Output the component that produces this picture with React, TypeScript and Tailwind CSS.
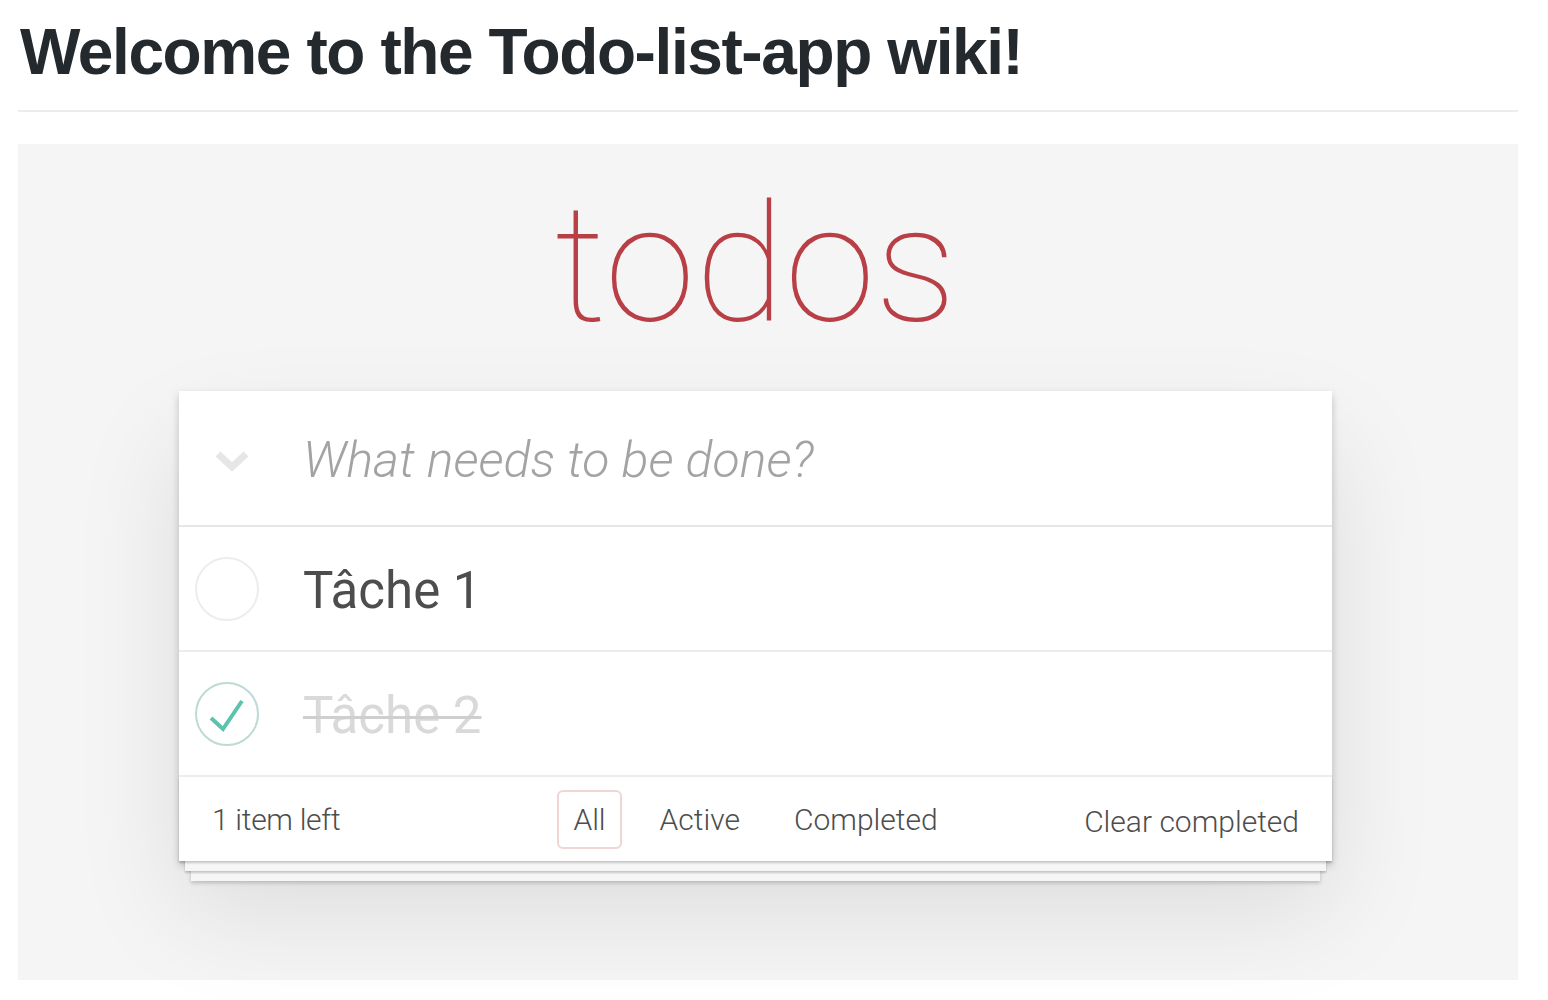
import React from "react";

const ui = { fontFamily: "Roboto, 'Liberation Sans', sans-serif" };

function Chevron() {
  return (
    <svg width="34" height="22" viewBox="0 0 34 22" className="mt-[6px] shrink-0">
      <path d="M3 4 L17 17 L31 4" fill="none" stroke="#e6e6e6" strokeWidth="7" strokeLinejoin="miter" />
    </svg>
  );
}

function Circle({ done }: { done: boolean }) {
  return (
    <svg width="66" height="66" viewBox="0 0 66 66" className="shrink-0">
      <circle cx="33" cy="33" r="31" fill="none" stroke={done ? "#bddad5" : "#ededed"} strokeWidth="2" />
      {done && <path d="M17 37 L29 48 L48 20" fill="none" stroke="#5dc2af" strokeWidth="4" />}
    </svg>
  );
}

function TodoRow({ text, done }: { text: string; done: boolean }) {
  return (
    <li className="flex h-[125px] items-center border-b-2 border-[#ededed] pl-[15px]">
      <Circle done={done} />
      <span
        className={
          done
            ? "ml-[43px] pt-[6px] text-[51px] text-[#d9d9d9] line-through decoration-[#cfcfcf] decoration-[3px]"
            : "ml-[43px] pt-[6px] text-[51px] text-[#4d4d4d]"
        }
        style={ui}
      >
        {text}
      </span>
    </li>
  );
}

export default function App() {
  return (
    <div className="min-h-screen bg-white pl-[18px]">
      <div className="w-[1500px]">
        <h1
          className="border-b-2 border-[#eaecef] pl-[2px] pt-[12px] pb-[18px] text-[64px] font-bold leading-[80px] tracking-[-1.4px] text-[#24292e]"
          style={{ fontFamily: "'Liberation Sans', Arial, sans-serif" }}
        >
          Welcome to the Todo-list-app wiki!
        </h1>

        <div className="mt-[32px] h-[836px] bg-[#f5f5f5] pl-[161px] pt-[35px]">
          <div className="w-[1153px]">
            <div
              className="text-center text-[164px] font-thin leading-[170px] text-[#b83f45]"
              style={ui}
            >
              todos
            </div>

            <section className="mt-[42px] bg-white shadow-[0_4px_8px_rgba(0,0,0,0.2),0_50px_100px_rgba(0,0,0,0.1)]">
              <div className="flex h-[136px] items-center border-b-2 border-[#e6e6e6] pl-[36px]">
                <Chevron />
                <span className="ml-[54px] pt-[4px] text-[50px] font-light italic text-[#a3a3a3]" style={ui}>
                  What needs to be done?
                </span>
              </div>

              <ul>
                <TodoRow text="Tâche 1" done={false} />
                <TodoRow text="Tâche 2" done={true} />
              </ul>

              <footer
                className="grid h-[84px] grid-cols-[1fr_auto_1fr] items-center px-[33px] text-[30px] font-light text-[#4d4d4d] shadow-[0_2px_2px_rgba(0,0,0,0.2),0_16px_0_-6px_#f6f6f6,0_18px_2px_-6px_rgba(0,0,0,0.2),0_32px_0_-12px_#f6f6f6,0_34px_4px_-12px_rgba(0,0,0,0.2)]"
                style={ui}
              >
                <span className="tracking-[-0.3px]">1 item left</span>
                <ul className="flex items-center gap-[22px]">
                  <li className="rounded-[6px] border-2 border-[#efd5d5] px-[14px] py-[5px]">All</li>
                  <li className="border-2 border-transparent px-[14px] py-[5px]">Active</li>
                  <li className="border-2 border-transparent px-[14px] py-[5px]">Completed</li>
                </ul>
                <span className="justify-self-end pt-[4px]">Clear completed</span>
              </footer>
            </section>
          </div>
        </div>
      </div>
    </div>
  );
}
